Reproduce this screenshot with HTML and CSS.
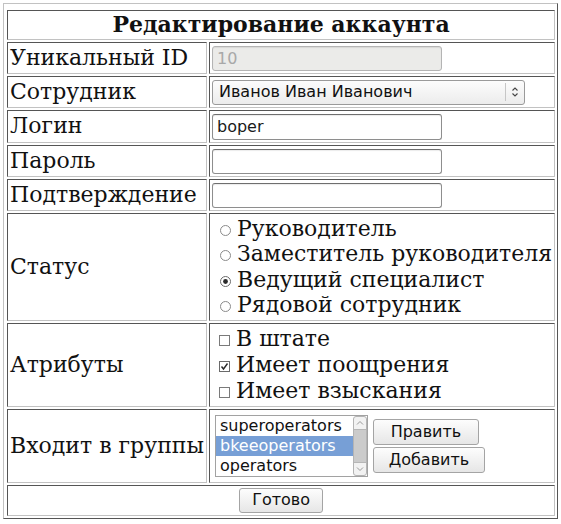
FILE: index.html
```html
<!DOCTYPE html>
<html lang="ru">
<head>
<meta charset="utf-8">
<title>Редактирование аккаунта</title>
<link rel="stylesheet" href="styles.css">
</head>
<body>
<table class="account">
  <tr><th colspan="2" class="title">Редактирование аккаунта</th></tr>
  <tr>
    <td class="label">Уникальный ID</td>
    <td class="field"><input class="text" type="text" value="10" disabled></td>
  </tr>
  <tr>
    <td class="label">Сотрудник</td>
    <td class="field">
      <div class="select">
        <span class="select-value">Иванов Иван Иванович</span>
        <span class="select-arrow"><svg width="8" height="12" viewBox="0 0 8 12"><path d="M1.5 4.5 L4 2 L6.5 4.5 M1.5 7.5 L4 10 L6.5 7.5" fill="none" stroke="#444" stroke-width="1.1"/></svg></span>
      </div>
    </td>
  </tr>
  <tr>
    <td class="label">Логин</td>
    <td class="field"><input class="text login" type="text" value="boper"></td>
  </tr>
  <tr>
    <td class="label">Пароль</td>
    <td class="field"><input class="text" type="password"></td>
  </tr>
  <tr>
    <td class="label">Подтверждение</td>
    <td class="field"><input class="text" type="password"></td>
  </tr>
  <tr>
    <td class="label">Статус</td>
    <td class="field choices">
      <div class="choice"><svg class="mark radio" width="11" height="11" viewBox="0 0 11 11"><circle cx="5.5" cy="5.5" r="5" fill="#fff" stroke="#8a8a8a"/></svg>Руководитель</div>
      <div class="choice"><svg class="mark radio" width="11" height="11" viewBox="0 0 11 11"><circle cx="5.5" cy="5.5" r="5" fill="#fff" stroke="#8a8a8a"/></svg>Заместитель руководителя</div>
      <div class="choice"><svg class="mark radio" width="11" height="11" viewBox="0 0 11 11"><circle cx="5.5" cy="5.5" r="5" fill="#fff" stroke="#6a6a6a"/><circle cx="5.5" cy="5.5" r="2.4" fill="#2a2a2a"/></svg>Ведущий специалист</div>
      <div class="choice"><svg class="mark radio" width="11" height="11" viewBox="0 0 11 11"><circle cx="5.5" cy="5.5" r="5" fill="#fff" stroke="#8a8a8a"/></svg>Рядовой сотрудник</div>
    </td>
  </tr>
  <tr>
    <td class="label">Атрибуты</td>
    <td class="field choices attrs">
      <div class="choice"><svg class="mark check" width="11" height="11" viewBox="0 0 11 11"><rect x="0.5" y="0.5" width="10" height="10" fill="#fff" stroke="#7a7a7a"/></svg>В штате</div>
      <div class="choice"><svg class="mark check" width="11" height="11" viewBox="0 0 11 11"><rect x="0.5" y="0.5" width="10" height="10" fill="#fff" stroke="#6a6a6a"/><path d="M2.5 5.5 L4.5 8 L8.5 2.5" fill="none" stroke="#2a2a2a" stroke-width="1.4"/></svg>Имеет поощрения</div>
      <div class="choice"><svg class="mark check" width="11" height="11" viewBox="0 0 11 11"><rect x="0.5" y="0.5" width="10" height="10" fill="#fff" stroke="#7a7a7a"/></svg>Имеет взыскания</div>
    </td>
  </tr>
  <tr>
    <td class="label">Входит в группы</td>
    <td class="field">
      <div class="groups">
        <div class="listbox">
          <div class="options">
            <div class="option">superoperators</div>
            <div class="option selected">bkeeoperators</div>
            <div class="option">operators</div>
          </div>
          <div class="scrollbar">
            <span class="sb-arrow"><svg width="8" height="6" viewBox="0 0 8 6"><path d="M1 4.5 L4 1.5 L7 4.5" fill="none" stroke="#999" stroke-width="1"/></svg></span>
            <span class="sb-thumb"></span>
            <span class="sb-arrow"><svg width="8" height="6" viewBox="0 0 8 6"><path d="M1 1.5 L4 4.5 L7 1.5" fill="none" stroke="#999" stroke-width="1"/></svg></span>
          </div>
        </div>
        <div class="group-buttons">
          <button class="btn btn-edit" type="button">Править</button>
          <button class="btn btn-add" type="button">Добавить</button>
        </div>
      </div>
    </td>
  </tr>
  <tr><td colspan="2" class="done"><button class="btn btn-done" type="button">Готово</button></td></tr>
</table>
</body>
</html>
```
FILE: styles.css
```css
body {
  margin: 3px;
  font-family: "DejaVu Serif", serif;
  font-size: 22px;
  line-height: 25.6px;
  color: #111;
  background: #fff;
}

.account {
  box-sizing: border-box;
  width: 554px;
  border-collapse: separate;
  border-spacing: 2px;
  padding: 4px 0 0 1px;
  border: 1px solid;
  border-color: #c2c2c2 #555 #555 #c2c2c2;
}

.account th,
.account td {
  border: 1px solid;
  border-color: #555 #c2c2c2 #c2c2c2 #555;
  padding: 2px;
}

.account .title {
  font-weight: bold;
  text-align: center;
  padding: 1px 2px;
  color: #111;
}

.label {
  width: 194px;
  white-space: nowrap;
  vertical-align: middle;
}

.field {
  vertical-align: middle;
}

.text {
  display: block;
  box-sizing: border-box;
  width: 230px;
  height: 25px;
  margin: 1px 0 0;
  padding: 0 4px;
  font-family: "DejaVu Sans", sans-serif;
  font-size: 16px;
  color: #1a1a1a;
  background: #fff;
  border: 1px solid #8e8e8e;
  border-top-color: #6e6e6e;
  border-radius: 3px;
  box-shadow: inset 0 1px 1px rgba(0, 0, 0, 0.08);
}

.text.login {
  height: 26px;
}

.text:disabled {
  background: #ebebe9;
  color: #a8a8a8;
  border-color: #b4b4b4;
}

.select {
  box-sizing: border-box;
  width: 313px;
  height: 25px;
  margin-top: 1px;
  display: flex;
  align-items: center;
  border: 1px solid #9a9a9a;
  border-radius: 3px;
  background: linear-gradient(#fcfcfc, #ececec);
  font-family: "DejaVu Sans", sans-serif;
  font-size: 16px;
  line-height: 20px;
  color: #111;
}

.select-value {
  flex: 1;
  padding-left: 6px;
}

.select-arrow {
  display: flex;
  align-items: center;
  justify-content: center;
  width: 18px;
  height: 18px;
  border-left: 1px solid #c6c6c6;
}

.choice {
  white-space: nowrap;
}

.attrs {
  line-height: 26px;
}

.mark {
  vertical-align: 0;
}

.radio {
  margin: 0 6px 0 8px;
}

.check {
  margin: 0 6px 0 7px;
}

.groups {
  display: flex;
  align-items: center;
  gap: 5px;
}

.listbox {
  display: flex;
  box-sizing: border-box;
  width: 153px;
  height: 62px;
  margin: 3px 0 3px 3px;
  border: 1px solid #a2a2a2;
  background: #fff;
  font-family: "DejaVu Sans", sans-serif;
  font-size: 16px;
  color: #111;
}

.options {
  flex: 1;
}

.option {
  height: 20px;
  line-height: 20px;
  padding-left: 4px;
  white-space: nowrap;
  overflow: hidden;
}

.option.selected {
  background: #779fd6;
  color: #fff;
}

.scrollbar {
  display: flex;
  flex-direction: column;
  width: 14px;
  border: 1px solid #b4b4b4;
  border-radius: 3px;
  background: #f2f2f2;
  box-sizing: border-box;
}

.sb-arrow {
  display: flex;
  align-items: center;
  justify-content: center;
  height: 12px;
}

.sb-thumb {
  flex: 1;
  background: #cbcbcb;
  border-top: 1px solid #b6b6b6;
  border-bottom: 1px solid #b6b6b6;
}

.group-buttons {
  display: flex;
  flex-direction: column;
  align-items: flex-start;
  gap: 2px;
}

.btn {
  box-sizing: border-box;
  height: 26px;
  margin: 0;
  padding: 0;
  font-family: "DejaVu Sans", sans-serif;
  font-size: 16px;
  line-height: 20px;
  color: #111;
  border: 1px solid #a4a4a4;
  border-radius: 3px;
  background: linear-gradient(#fdfdfd, #e6e6e6);
}

.btn-edit {
  width: 106px;
}

.btn-add {
  width: 112px;
}

.btn-done {
  display: block;
  margin: 0 auto;
  width: 84px;
  height: 25px;
}

.done {
  text-align: center;
}
```
